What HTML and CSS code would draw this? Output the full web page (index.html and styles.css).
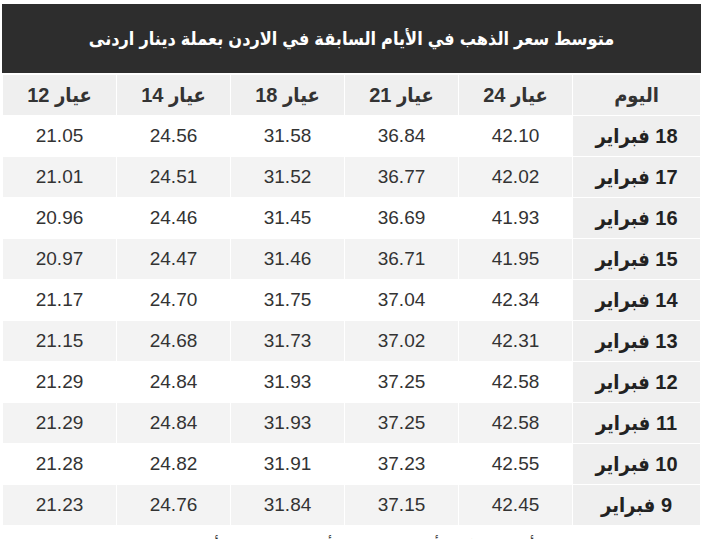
FILE: index.html
```html
<!DOCTYPE html>
<html lang="ar" dir="rtl">
<head>
<meta charset="utf-8">
<title>متوسط سعر الذهب</title>
<link rel="stylesheet" href="styles.css">
</head>
<body>
<div class="wrap">
  <div class="title">متوسط سعر الذهب في الأيام السابقة في الاردن بعملة دينار اردنى</div>
  <table class="gold">
    <colgroup>
      <col class="c-day"><col class="c-k"><col class="c-k"><col class="c-k"><col class="c-k"><col class="c-k">
    </colgroup>
    <thead>
      <tr><th>اليوم</th><th>عيار 24</th><th>عيار 21</th><th>عيار 18</th><th>عيار 14</th><th>عيار 12</th></tr>
    </thead>
    <tbody>
      <tr><th>18 فبراير</th><td>42.10</td><td>36.84</td><td>31.58</td><td>24.56</td><td>21.05</td></tr>
      <tr><th>17 فبراير</th><td>42.02</td><td>36.77</td><td>31.52</td><td>24.51</td><td>21.01</td></tr>
      <tr><th>16 فبراير</th><td>41.93</td><td>36.69</td><td>31.45</td><td>24.46</td><td>20.96</td></tr>
      <tr><th>15 فبراير</th><td>41.95</td><td>36.71</td><td>31.46</td><td>24.47</td><td>20.97</td></tr>
      <tr><th>14 فبراير</th><td>42.34</td><td>37.04</td><td>31.75</td><td>24.70</td><td>21.17</td></tr>
      <tr><th>13 فبراير</th><td>42.31</td><td>37.02</td><td>31.73</td><td>24.68</td><td>21.15</td></tr>
      <tr><th>12 فبراير</th><td>42.58</td><td>37.25</td><td>31.93</td><td>24.84</td><td>21.29</td></tr>
      <tr><th>11 فبراير</th><td>42.58</td><td>37.25</td><td>31.93</td><td>24.84</td><td>21.29</td></tr>
      <tr><th>10 فبراير</th><td>42.55</td><td>37.23</td><td>31.91</td><td>24.82</td><td>21.28</td></tr>
      <tr><th>9 فبراير</th><td>42.45</td><td>37.15</td><td>31.84</td><td>24.76</td><td>21.23</td></tr>
    </tbody>
  </table>
  <p class="note">* الأسعار المذكورة أعلاه هي متوسط أسعار الذهب في الأيام السابقة</p>
</div>
</body>
</html>
```
FILE: styles.css
```css
html, body {
  margin: 0;
  padding: 0;
  background: #ffffff;
}
body {
  font-family: "Liberation Sans", "DejaVu Sans Condensed", "DejaVu Sans", sans-serif;
  color: #333333;
}
.wrap {
  width: 699px;
  margin: 4px 11px 0 auto;
}
.title {
  height: 69px;
  background: #2d2d2d;
  color: #ffffff;
  font-weight: bold;
  font-size: 18px;
  display: flex;
  align-items: center;
  justify-content: center;
}
.gold {
  width: 699px;
  table-layout: fixed;
  border-collapse: collapse;
  border-top: 2px solid #ffffff;
}
.c-day { width: 128px; }
.c-k { width: 114px; }
.gold th, .gold td {
  border: 1px solid #ffffff;
  height: 40px;
  padding: 0;
  text-align: center;
  vertical-align: middle;
}
.gold thead th {
  background: #efefef;
  font-size: 20px;
  font-weight: bold;
  color: #333333;
}
.gold tbody th {
  background: #efefef;
  font-size: 20px;
  font-weight: bold;
  color: #222222;
}
.gold td {
  font-size: 19px;
  color: #333333;
}
.gold tbody tr:nth-child(even) td {
  background: #f3f3f3;
}
.note {
  margin: 10px 0 0;
  font-size: 16px;
  text-align: center;
  color: #333333;
}
```
